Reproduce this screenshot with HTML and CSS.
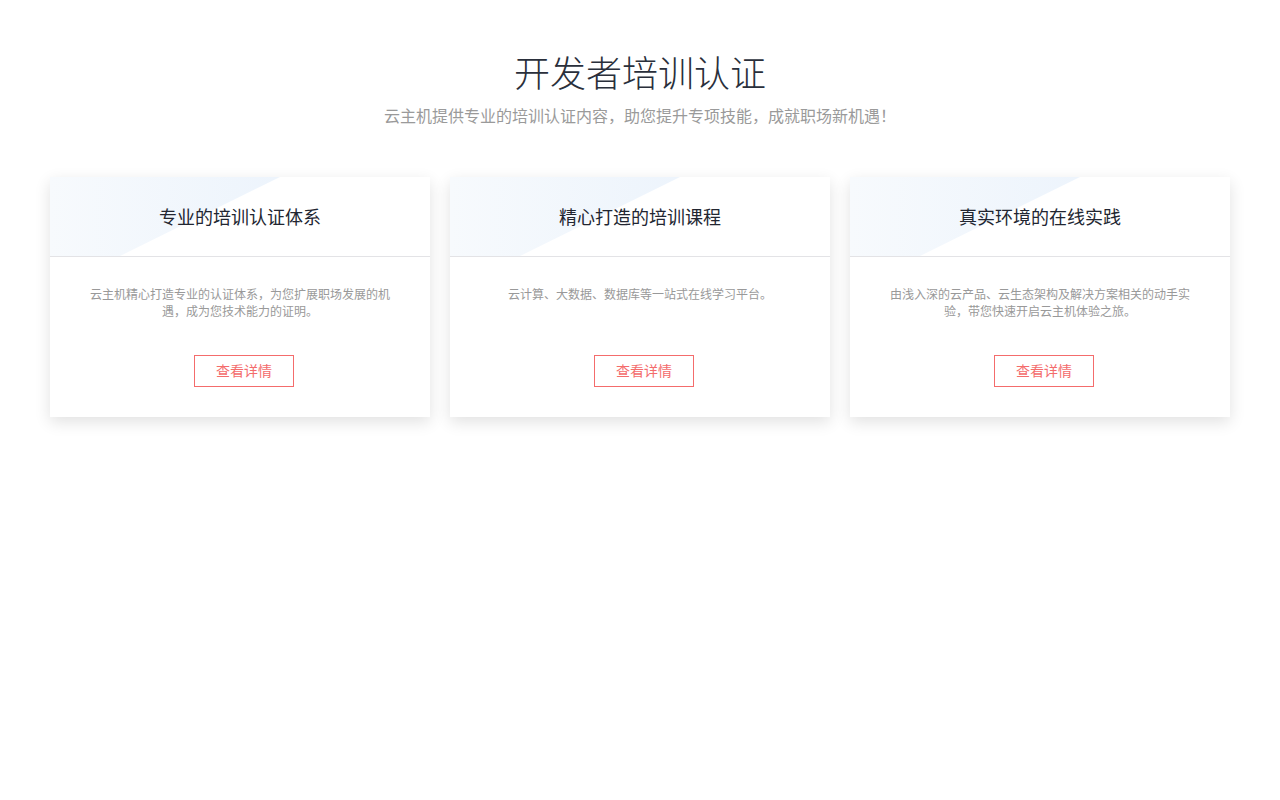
FILE: index.html
```html
<!DOCTYPE html>
<html lang="zh-CN">
<head>
    <meta charset="UTF-8">
    <meta name="viewport" content="width=device-width, initial-scale=1.0">
    <title>开发者培训认证</title>
    <link rel="stylesheet" href="styles.css">
</head>
<body>
    <div class="intro">
        <h1>开发者培训认证</h1>
        <p class="subtitle">云主机提供专业的培训认证内容，助您提升专项技能，成就职场新机遇！</p>
    </div>
    <div class="cards">
        <div class="card">
            <div class="card-head">
                <h2>专业的培训认证体系</h2>
            </div>
            <div class="card-body">
                <p class="desc">云主机精心打造专业的认证体系，为您扩展职场发展的机遇，成为您技术能力的证明。</p>
                <a class="btn" href="#">查看详情</a>
            </div>
        </div>
        <div class="card">
            <div class="card-head">
                <h2>精心打造的培训课程</h2>
            </div>
            <div class="card-body">
                <p class="desc">云计算、大数据、数据库等一站式在线学习平台。</p>
                <a class="btn" href="#">查看详情</a>
            </div>
        </div>
        <div class="card">
            <div class="card-head">
                <h2>真实环境的在线实践</h2>
            </div>
            <div class="card-body">
                <p class="desc">由浅入深的云产品、云生态架构及解决方案相关的动手实验，带您快速开启云主机体验之旅。</p>
                <a class="btn" href="#">查看详情</a>
            </div>
        </div>
    </div>
</body>
</html>
```

FILE: styles.css
```css
body {
    margin: 0;
    padding: 0;
    background: #fff;
    font-family: "Noto Sans CJK SC", "Liberation Sans", sans-serif;
    color: #333;
}
.intro {
    padding-top: 47px;
    text-align: center;
}
.intro h1 {
    margin: 0;
    font-size: 36px;
    line-height: 48px;
    font-weight: 300;
    color: #2a2f3b;
}
.subtitle {
    margin: 8px 0 0;
    font-size: 16px;
    line-height: 24px;
    color: #9a9a9a;
}
.cards {
    display: flex;
    justify-content: center;
    gap: 20px;
    margin-top: 50px;
    padding-bottom: 40px;
}
.card {
    width: 380px;
    background: #fff;
    box-shadow: 0 5px 15px rgba(0, 0, 0, 0.12);
    text-align: center;
}
.card-head {
    position: relative;
    height: 79px;
    border-bottom: 1px solid #e3e3e6;
    display: flex;
    align-items: center;
    justify-content: center;
    overflow: hidden;
}
.card-head::before {
    content: "";
    position: absolute;
    left: 0;
    top: 0;
    width: 230px;
    height: 79px;
    background: linear-gradient(90deg, #f7fafd 0%, #edf4fc 100%);
    clip-path: polygon(0 0, 230px 0, 70px 79px, 0 79px);
}
.card-head h2 {
    position: relative;
    top: -1px;
    margin: 0;
    font-size: 18px;
    line-height: 26px;
    font-weight: normal;
    color: #222631;
}
.card-body {
    padding: 28px 40px 30px;
}
.desc {
    margin: 0;
    min-height: 34px;
    font-size: 12px;
    line-height: 17px;
    color: #999;
}
.btn {
    display: block;
    box-sizing: border-box;
    width: 100px;
    height: 32px;
    margin: 36px auto 0;
    position: relative;
    left: 4px;
    border: 1px solid #f46c6c;
    color: #f46c6c;
    font-size: 14px;
    line-height: 28px;
    text-decoration: none;
}
```
